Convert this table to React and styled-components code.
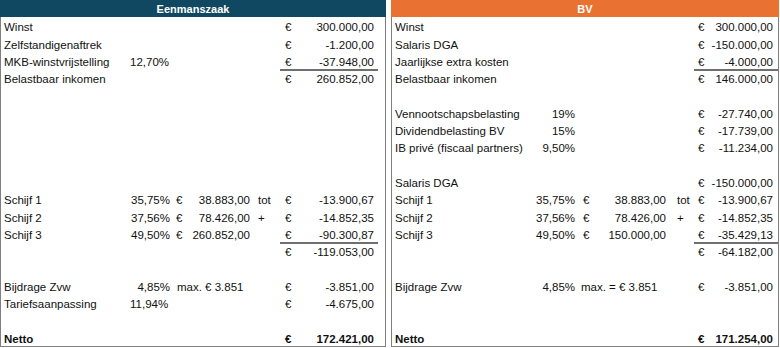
import React from "react";
import styled, { createGlobalStyle } from "styled-components";

const Global = createGlobalStyle`
  html, body { margin: 0; padding: 0; background: #ffffff; }
  body { font-family: "Liberation Sans", Arial, sans-serif; color: #111; }
`;

const Page = styled.div`
  display: flex;
  gap: 5px;
  width: 780px;
  height: 348px;
  overflow: hidden;
`;

const Panel = styled.section`
  width: ${(p) => p.$width}px;
  box-sizing: border-box;
  border: 1px solid #7f7f7f;
  border-top: none;
  height: 347px;
  display: flex;
  flex-direction: column;
`;

const Header = styled.div`
  height: 17px;
  margin: 0 -1px;
  background: ${(p) => p.$bg};
  color: #fff;
  font-weight: 700;
  font-size: 11px;
  line-height: 17px;
  padding-top: 1px;
  box-sizing: border-box;
  text-align: center;
`;

const Row = styled.div`
  display: grid;
  grid-template-columns: ${(p) => p.$cols};
  height: 17.3px;
  align-items: end;
  font-size: 11.5px;
  line-height: 13px;
  font-weight: ${(p) => (p.$bold ? 700 : 400)};
  white-space: nowrap;
`;

const Label = styled.div`
  padding-left: 3px;
`;

const Pct = styled.div`
  text-align: ${(p) => (p.$left ? "left" : "right")};
  padding: ${(p) => (p.$left ? "0 0 0 4px" : "0 2px 0 0")};
`;

const Money = styled.div`
  display: flex;
  justify-content: space-between;
  padding-left: ${(p) => p.$pl}px;
  padding-right: ${(p) => p.$pr}px;
  position: relative;
  height: 100%;
  align-items: flex-end;
  box-sizing: border-box;
`;

const Note = styled.div`
  padding-left: ${(p) => p.$pl}px;
`;

const Rule = styled.span`
  position: absolute;
  top: 0;
  left: 0;
  right: ${(p) => p.$right}px;
  height: 2px;
  background: #6f6f6f;
`;

const Op = styled.div`
  padding-left: ${(p) => p.$pl}px;
`;

const left = {
  width: 386,
  cols: "125px 46px 80px 28px 105px",
  eur: { pl: 4, pr: 2 },
  op: 6,
  val: { pl: 5, pr: 11 },
  ruleRight: 7,
  notePl: 5,
  rows: [
    { label: "Winst", v: "300.000,00" },
    { label: "Zelfstandigenaftrek", v: "-1.200,00" },
    { label: "MKB-winstvrijstelling", pct: "12,70%", pctLeft: true, v: "-37.948,00" },
    { label: "Belastbaar inkomen", v: "260.852,00", rule: true },
    {}, {}, {}, {}, {}, {},
    { label: "Schijf 1", pct: "35,75%", amt: "38.883,00", op: "tot", v: "-13.900,67" },
    { label: "Schijf 2", pct: "37,56%", amt: "78.426,00", op: "+", v: "-14.852,35" },
    { label: "Schijf 3", pct: "49,50%", amt: "260.852,00", v: "-90.300,87" },
    { v: "-119.053,00", rule: true },
    {},
    { label: "Bijdrage Zvw", pct: "4,85%", note: "max. € 3.851", v: "-3.851,00" },
    { label: "Tariefsaanpassing", pct: "11,94%", pctLeft: true, v: "-4.675,00" },
    {},
    { label: "Netto", v: "172.421,00", bold: true },
  ],
};

const right = {
  width: 388,
  cols: "138px 47px 93px 24px 84px",
  eur: { pl: 6, pr: 4 },
  op: 7,
  val: { pl: 4, pr: 5 },
  ruleRight: 0,
  notePl: 4,
  rows: [
    { label: "Winst", v: "300.000,00" },
    { label: "Salaris DGA", v: "-150.000,00" },
    { label: "Jaarlijkse extra kosten", v: "-4.000,00" },
    { label: "Belastbaar inkomen", v: "146.000,00", rule: true },
    {},
    { label: "Vennootschapsbelasting", pct: "19%", v: "-27.740,00" },
    { label: "Dividendbelasting BV", pct: "15%", v: "-17.739,00" },
    { label: "IB privé (fiscaal partners)", pct: "9,50%", v: "-11.234,00" },
    {},
    { label: "Salaris DGA", v: "-150.000,00" },
    { label: "Schijf 1", pct: "35,75%", amt: "38.883,00", op: "tot", v: "-13.900,67" },
    { label: "Schijf 2", pct: "37,56%", amt: "78.426,00", op: "+", v: "-14.852,35" },
    { label: "Schijf 3", pct: "49,50%", amt: "150.000,00", v: "-35.429,13" },
    { v: "-64.182,00", rule: true },
    {},
    { label: "Bijdrage Zvw", pct: "4,85%", note: "max. = € 3.851", v: "-3.851,00" },
    {},
    {},
    { label: "Netto", v: "171.254,00", bold: true },
  ],
};

function Table({ title, bg, spec }) {
  return (
    <Panel $width={spec.width}>
      <Header $bg={bg}>{title}</Header>
      {spec.rows.map((r, i) => (
        <Row key={i} $cols={spec.cols} $bold={r.bold}>
          <Label>{r.label || ""}</Label>
          <Pct $left={r.pctLeft}>{r.pct || ""}</Pct>
          {r.note ? (
            <Note $pl={spec.notePl}>{r.note}</Note>
          ) : (
            <Money $pl={spec.eur.pl} $pr={spec.eur.pr}>
              {r.amt ? (
                <>
                  <span>€</span>
                  <span>{r.amt}</span>
                </>
              ) : null}
            </Money>
          )}
          <Op $pl={spec.op}>{r.op || ""}</Op>
          <Money $pl={spec.val.pl} $pr={spec.val.pr}>
            {r.rule ? <Rule $right={spec.ruleRight} /> : null}
            {r.v ? (
              <>
                <span>€</span>
                <span>{r.v}</span>
              </>
            ) : null}
          </Money>
        </Row>
      ))}
    </Panel>
  );
}

export default function App() {
  return (
    <>
      <Global />
      <Page>
        <Table title="Eenmanszaak" bg="#104862" spec={left} />
        <Table title="BV" bg="#E97132" spec={right} />
      </Page>
    </>
  );
}
